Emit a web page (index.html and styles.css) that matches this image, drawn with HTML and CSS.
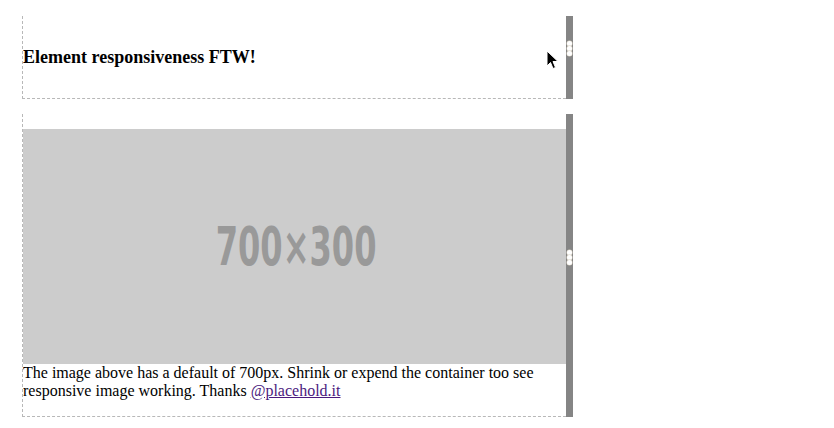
FILE: index.html
```html
<!DOCTYPE html>
<html>
<head>
<meta charset="utf-8">
<link rel="stylesheet" href="styles.css">
</head>
<body>
<div class="page">
  <div class="resizable">
    <div class="content content-head">
      <h3 class="title">Element responsiveness FTW!</h3>
    </div>
    <div class="bar"><span class="dots"><i></i><i></i><i></i></span></div>
    <svg class="cursor" width="13" height="20" viewBox="0 0 13 20"><path d="M1 1 L1 16 L4.5 12.5 L7 18.5 L9.5 17.5 L7 11.5 L12 11.5 Z" fill="#000" stroke="#fff" stroke-width="1"/></svg>
  </div>
  <div class="resizable">
    <div class="content content-img">
      <div class="placeholder"><span class="ph-text">700×300</span></div>
      <p class="caption">The image above has a default of 700px. Shrink or expend the container too see responsive image working. Thanks <a href="#" class="link">@placehold.it</a></p>
    </div>
    <div class="bar"><span class="dots dots-low"><i></i><i></i><i></i></span></div>
  </div>
</div>
</body>
</html>
```
FILE: styles.css
```css
html, body {
  margin: 0;
  padding: 0;
  background: #fff;
}
body {
  font-family: "Liberation Serif", "Times New Roman", serif;
  font-size: 16px;
  color: #000;
}
.page {
  padding: 16px 0 0 22px;
  width: 551px;
  display: flex;
  flex-direction: column;
  gap: 15px;
}
.resizable {
  position: relative;
  display: flex;
  flex-direction: row;
}
.content {
  flex: 1;
  min-width: 0;
  border-left: 1px dashed #b8b8b8;
  border-bottom: 1px dashed #b8b8b8;
}
.content-head {
  padding: 30px 0;
}
.title {
  margin: 0;
  font-size: 18px;
  line-height: 22px;
  font-weight: bold;
}
.content-img {
  padding-top: 15px;
}
.placeholder {
  height: 235px;
  background: #cccccc;
  display: flex;
  align-items: center;
  justify-content: center;
}
.ph-text {
  font-family: "DejaVu Sans Condensed", "DejaVu Sans", sans-serif;
  font-stretch: condensed;
  font-weight: bold;
  font-size: 54px;
  line-height: 1;
  color: #999999;
  transform: scaleX(0.66);
  padding-left: 4px;
}
.caption {
  margin: 0 0 16px;
  line-height: 18px;
}
.link {
  color: #4b1a7e;
}
.bar {
  width: 7px;
  background: #858585;
  position: relative;
}
.dots {
  position: absolute;
  left: 1px;
  top: calc(50% - 17px);
  display: flex;
  flex-direction: column;
}
.dots-low {
  top: calc(50% - 16px);
}
.dots i {
  display: block;
  width: 5px;
  height: 5px;
  border-radius: 50%;
  background: #fff;
  box-shadow: 0 0 0 0.5px #d8d0c0;
}
.cursor {
  position: absolute;
  left: 524px;
  top: 34px;
}
```
